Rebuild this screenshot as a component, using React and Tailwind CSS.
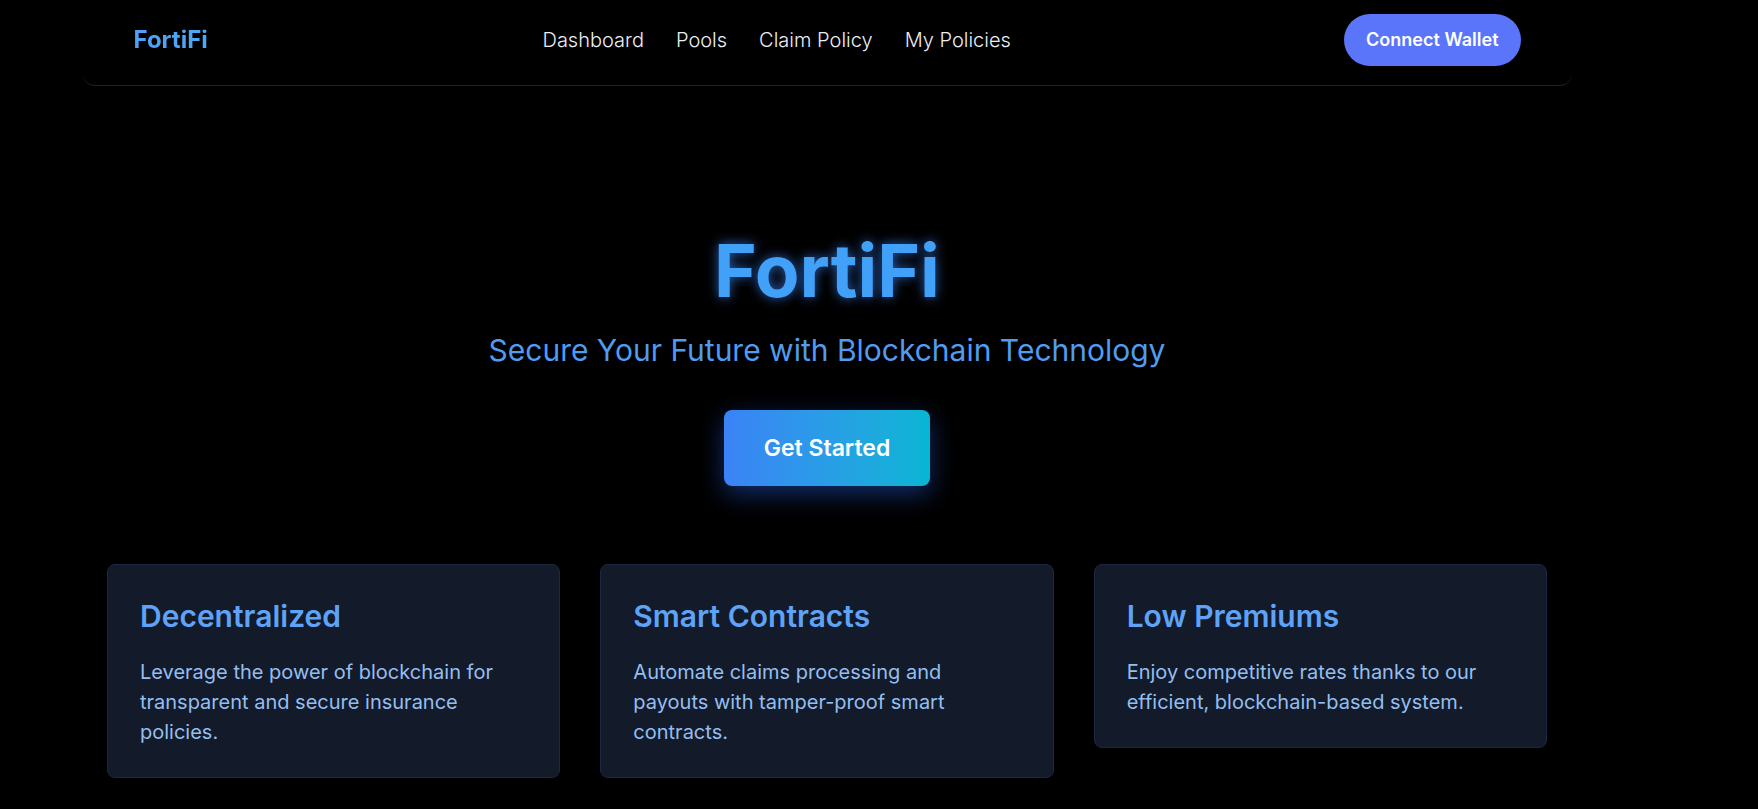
import React from "react";

const features = [
  {
    title: "Decentralized",
    body: "Leverage the power of blockchain for transparent and secure insurance policies.",
  },
  {
    title: "Smart Contracts",
    body: "Automate claims processing and payouts with tamper-proof smart contracts.",
  },
  {
    title: "Low Premiums",
    body: "Enjoy competitive rates thanks to our efficient, blockchain-based system.",
  },
];

export default function App() {
  return (
    <div className="min-h-screen bg-black font-['Inter',sans-serif]">
      <div className="w-[1654px] min-h-screen">
        <nav className="mx-auto flex w-[1489px] items-center rounded-xl border-b border-[#1a2132] px-[51px] pt-[14px] pb-[19px]">
          <div className="w-[409px] bg-gradient-to-r from-[#4f9ff8] to-[#22d3ee] bg-clip-text text-2xl font-bold text-transparent">
            <span>FortiFi</span>
          </div>
          <div className="flex items-center gap-8 text-xl font-light text-[#eceef2]">
            <a>Dashboard</a>
            <a>Pools</a>
            <a>Claim Policy</a>
            <a>My Policies</a>
          </div>
          <button className="ml-auto rounded-full bg-[#5a75fa] px-[22px] py-3 text-lg font-semibold leading-7 text-white">
            Connect Wallet
          </button>
        </nav>

        <section className="flex flex-col items-center pt-[148px]">
          <h1 className="text-[73px] font-bold leading-none text-[#41a0f8] [text-shadow:0_0_12px_rgba(59,130,246,0.75)]">
            FortiFi
          </h1>
          <p className="mt-[25px] text-3xl text-[#4f9cf0]">
            Secure Your Future with Blockchain Technology
          </p>
          <button className="mt-[42px] rounded-lg bg-gradient-to-r from-[#3b82f6] to-[#06b6d4] px-10 py-6 text-[23px] font-semibold leading-7 text-white shadow-[0_8px_24px_rgba(37,99,235,0.45)]">
            Get Started
          </button>
        </section>

        <section className="mx-auto mt-[78px] grid w-[1440px] grid-cols-3 items-start gap-10">
          {features.map((f) => (
            <div
              key={f.title}
              className="rounded-lg border border-[#1c2740] bg-[#131a2a] px-8 pt-[34px] pb-[30px]"
            >
              <h3 className="text-3xl font-semibold leading-[34px] text-[#5ea3f7]">
                {f.title}
              </h3>
              <p className="mt-6 text-xl leading-[30px] text-[#93bff0]">{f.body}</p>
            </div>
          ))}
        </section>
      </div>
    </div>
  );
}
